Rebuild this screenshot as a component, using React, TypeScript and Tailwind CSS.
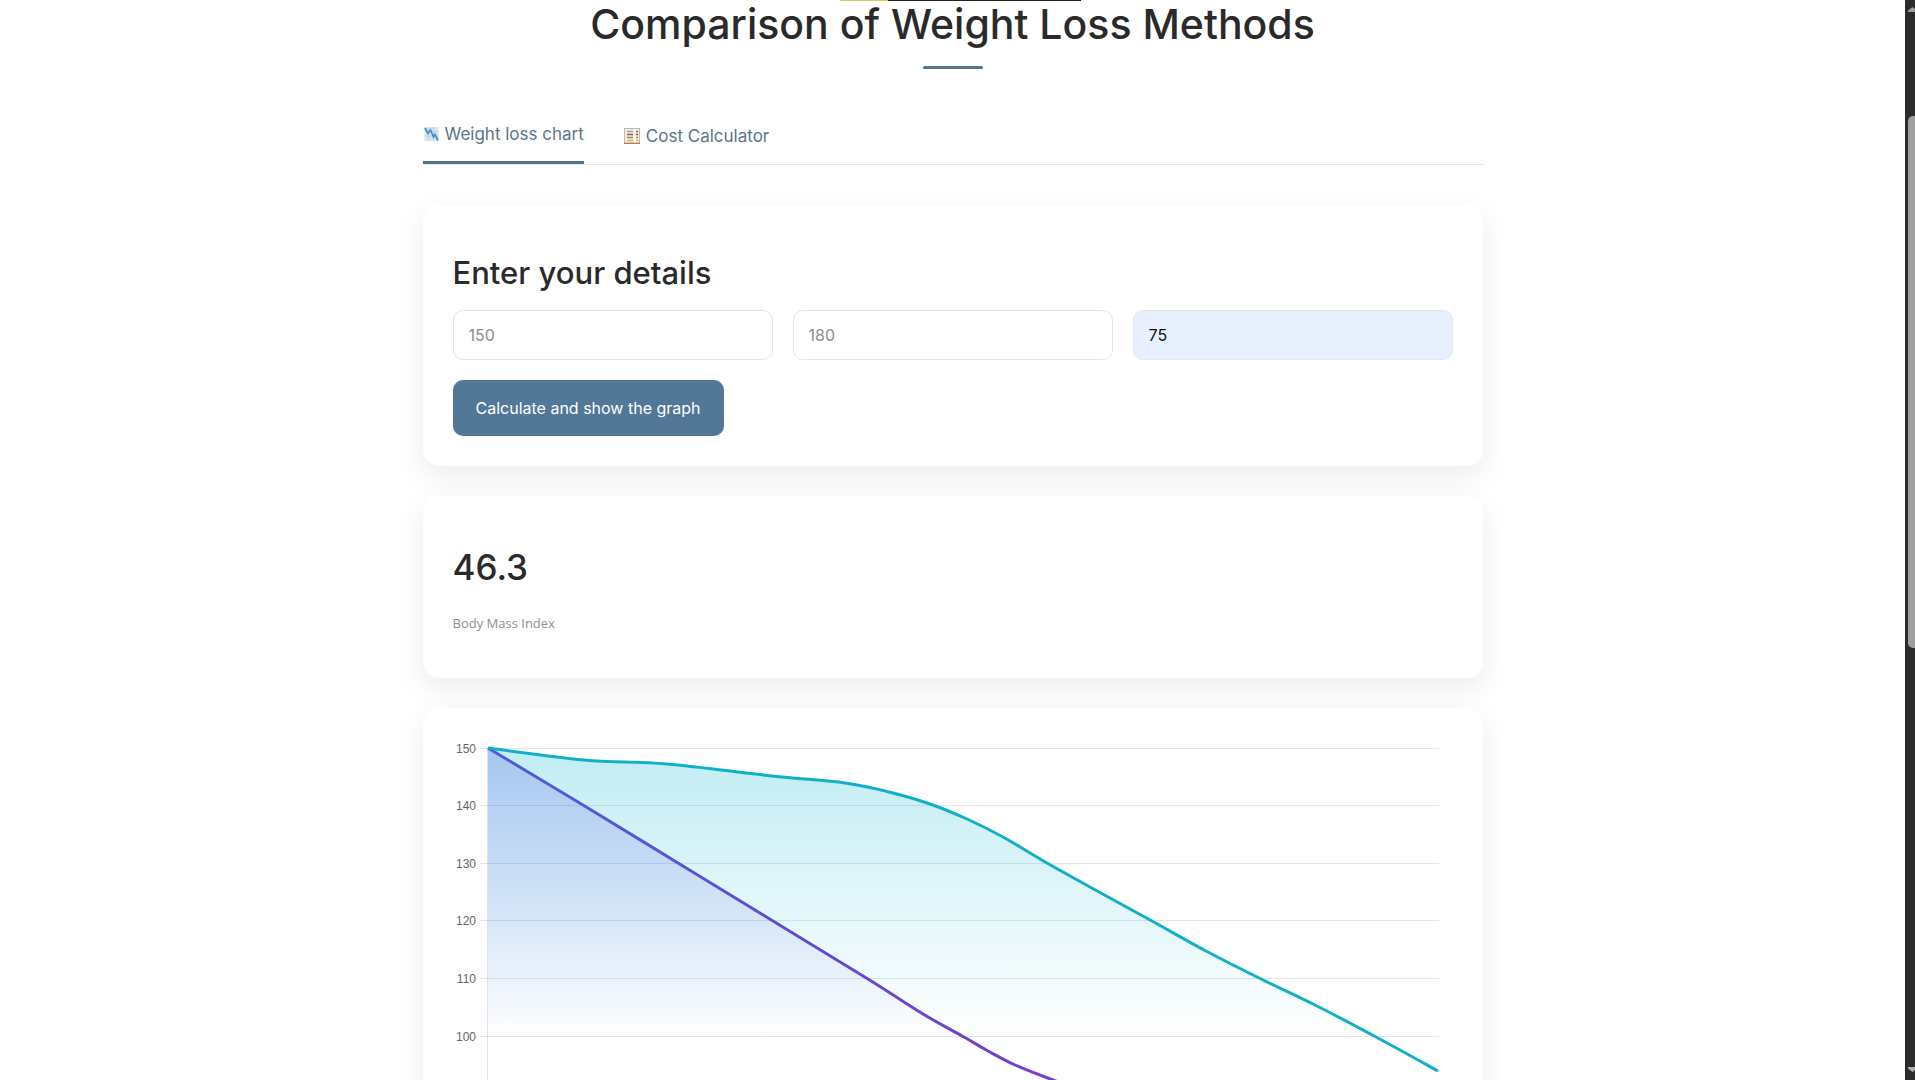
import React from "react";

type Point = [number, number];

const TEAL: Point[] = [
  [35, 10], [131, 22], [214, 26], [319, 38], [392, 45], [436, 54], [477, 66], [514, 81], [550, 99],
  [594, 125], [646, 154], [699, 183], [753, 213], [806, 240], [864, 268], [923, 299], [985, 333],
];

const VIOLET: Point[] = [
  [35, 10], [130, 67], [225, 125], [320, 183], [415, 241], [470, 276], [511, 299],
  [535, 313], [562, 327], [600, 342], [700, 378], [800, 402], [900, 416], [985, 424],
];

const TICKS = [150, 140, 130, 120, 110, 100];
const BASE = 420;

function curve(points: Point[]): string {
  let d = `M${points[0][0]} ${points[0][1]}`;
  for (let i = 0; i < points.length - 1; i++) {
    const a = points[Math.max(i - 1, 0)];
    const b = points[i];
    const c = points[i + 1];
    const e = points[Math.min(i + 2, points.length - 1)];
    d += `C${b[0] + (c[0] - a[0]) / 6} ${b[1] + (c[1] - a[1]) / 6} ${c[0] - (e[0] - b[0]) / 6} ${c[1] - (e[1] - b[1]) / 6} ${c[0]} ${c[1]}`;
  }
  return d;
}

function area(points: Point[]): string {
  return `${curve(points)}V${BASE}H${points[0][0]}Z`;
}

function ChartIcon() {
  return (
    <svg viewBox="0 0 16 16" className="size-4 shrink-0" aria-hidden="true">
      <rect x="1.500" y="1" width="14" height="14" fill="#dbe4ec" />
      <path d="M1.500 5.500h14M1.500 10h14M6 1v14M10.500 1v14" stroke="#bccbd8" strokeWidth="0.800" />
      <path d="M2 2 5 7.500 7.500 4l3 7 1.500-2.500L15 14.500" fill="none" stroke="#3d8fce" strokeWidth="1.700" />
    </svg>
  );
}

function AbacusIcon() {
  return (
    <svg viewBox="0 0 16 16" className="size-4 shrink-0" aria-hidden="true">
      <rect x="0.500" y="0.500" width="15" height="15" fill="#f3efe6" stroke="#c9b7a0" />
      <path d="M0 15.300h16" stroke="#ad7f5c" strokeWidth="1.400" />
      <path d="M11 1v14" stroke="#fff" />
      <path d="M3 3.500h6" stroke="#7fa6d8" strokeWidth="1.500" />
      <path d="M3 6.500h6M12 6.500h2" stroke="#c8404f" strokeWidth="1.700" />
      <path d="M3 9.500h6M12 9.500h2" stroke="#7c9a4c" strokeWidth="1.500" />
      <path d="M3 12.500h6M12 12.500h2" stroke="#dfb43c" strokeWidth="1.700" />
      <path d="M12 3.500h2" stroke="#6c6cae" strokeWidth="1.500" />
    </svg>
  );
}

function WeightChart() {
  return (
    <svg viewBox="0 0 1000 460" className="block w-full" role="img" aria-label="Weight loss chart">
      <defs>
        <linearGradient id="tealFill" gradientUnits="userSpaceOnUse" x1="0" y1="0" x2="0" y2="300">
          <stop offset="0" stopColor="#06b6d4" stopOpacity="0.26" />
          <stop offset="1" stopColor="#06b6d4" stopOpacity="0" />
        </linearGradient>
        <linearGradient id="violetFill" gradientUnits="userSpaceOnUse" x1="0" y1="0" x2="0" y2="300">
          <stop offset="0" stopColor="#4f46e5" stopOpacity="0.24" />
          <stop offset="1" stopColor="#4f46e5" stopOpacity="0" />
        </linearGradient>
        <linearGradient id="violetLine" gradientUnits="userSpaceOnUse" x1="0" y1="0" x2="0" y2="400">
          <stop offset="0" stopColor="#4f5cdc" />
          <stop offset="1" stopColor="#7c3ac8" />
        </linearGradient>
      </defs>
      {TICKS.map((tick, i) => {
        const y = Math.floor(10 + i * 57.6) + 0.5;
        return (
          <g key={tick}>
            <path d={`M27 ${y}H986`} stroke="#000" strokeOpacity="0.1" />
            <text x="23" y={y + 4} textAnchor="end" fontSize="12" fill="#666" fontFamily="'Liberation Sans', Arial, sans-serif">
              {tick}
            </text>
          </g>
        );
      })}
      <path d="M34.500 10V460" stroke="#000" strokeOpacity="0.1" />
      <path d={area(TEAL)} fill="url(#tealFill)" />
      <path d={area(VIOLET)} fill="url(#violetFill)" />
      <path d={curve(VIOLET)} fill="none" stroke="url(#violetLine)" strokeWidth="3" />
      <path d={curve(TEAL)} fill="none" stroke="#12b0c8" strokeWidth="3" />
    </svg>
  );
}

function Card({ children }: { children: React.ReactNode }) {
  return (
    <section className="rounded-2xl bg-white p-[30px] shadow-[0_10px_30px_rgba(0,0,0,0.08)]">{children}</section>
  );
}

const inputBase = "h-[50px] w-full rounded-[10px] border px-[15px] text-base outline-none";

export default function App() {
  return (
    <div className="flex h-screen overflow-hidden bg-white font-['Inter',sans-serif] text-[#2a2a2a]">
      <main className="relative min-w-0 flex-1 overflow-hidden">
        <div className="absolute top-0 left-[840px] flex h-px w-[241px]" aria-hidden="true">
          <span className="w-12 bg-[#d8c95c]" />
          <span className="flex-1 bg-[#222]" />
        </div>
        <div className="mx-auto w-full max-w-[1060px]">
          <header className="flex flex-col items-center">
            <h1 className="mb-[18px] text-[41px] leading-[48px] font-medium whitespace-nowrap">Comparison of Weight Loss Methods</h1>
            <span className="h-[3px] w-[60px] rounded-sm bg-[#54758f]" />
          </header>

          <nav role="tablist" className="mt-12 mb-10 flex h-12 gap-10 border-b border-[#e4e6e8] text-[17px] text-[#5d7489]">
            <button role="tab" aria-selected="true" className="flex h-full items-start gap-[6px] border-b-[3px] border-[#54758f] pt-[5px] leading-6">
              <span className="flex h-6 items-center"><ChartIcon /></span>
              Weight loss chart
            </button>
            <button role="tab" aria-selected="false" className="flex h-full items-start gap-[6px] pt-[7px] leading-6">
              <span className="flex h-6 items-center"><AbacusIcon /></span>
              Cost Calculator
            </button>
          </nav>

          <div className="flex flex-col gap-[30px]">
            <Card>
              <h2 className="mt-4 mb-[15px] text-[31px] leading-[44px] font-medium">Enter your details</h2>
              <div className="mb-5 grid grid-cols-3 gap-5">
                <input aria-label="Current weight" placeholder="150" className={`${inputBase} border-[#e2e5ea] bg-white placeholder:text-[#8c8c8c]`} />
                <input aria-label="Height" placeholder="180" className={`${inputBase} border-[#e2e5ea] bg-white placeholder:text-[#8c8c8c]`} />
                <input aria-label="Target weight" defaultValue="75" className={`${inputBase} border-[#e2e7f2] bg-[#e8f0fe] text-[#111]`} />
              </div>
              <button className="block h-14 rounded-[10px] bg-[#527797] px-[23px] text-base text-white">
                Calculate and show the graph
              </button>
            </Card>

            <Card>
              <p className="mt-4 text-[35px] leading-[50px] font-medium">46.3</p>
              <p className="mt-5 mb-3.5 font-['Open_Sans',sans-serif] text-[13px] leading-[22px] text-[#8f8f8f]">Body Mass Index</p>
            </Card>

            <Card>
              <WeightChart />
            </Card>
          </div>
        </div>
      </main>

      <div className="flex w-[10px] shrink-0 flex-col overflow-hidden bg-[#2b2b2b] pl-[3px]" aria-hidden="true">
        <svg viewBox="0 0 7 116" className="h-[116px] w-[7px] shrink-0">
          <path d="M0 12V10.500L4.500 7 7 9V12Z" fill="#a0a0a0" />
        </svg>
        <span className="h-[532px] w-3 shrink-0 rounded-[5px] bg-[#9f9f9f]" />
        <span className="flex-1" />
        <svg viewBox="0 0 7 13" className="h-[13px] w-[7px] shrink-0">
          <path d="M0 0H7V3L4.500 5 0 1.500Z" fill="#b0b0b0" />
        </svg>
      </div>
    </div>
  );
}
